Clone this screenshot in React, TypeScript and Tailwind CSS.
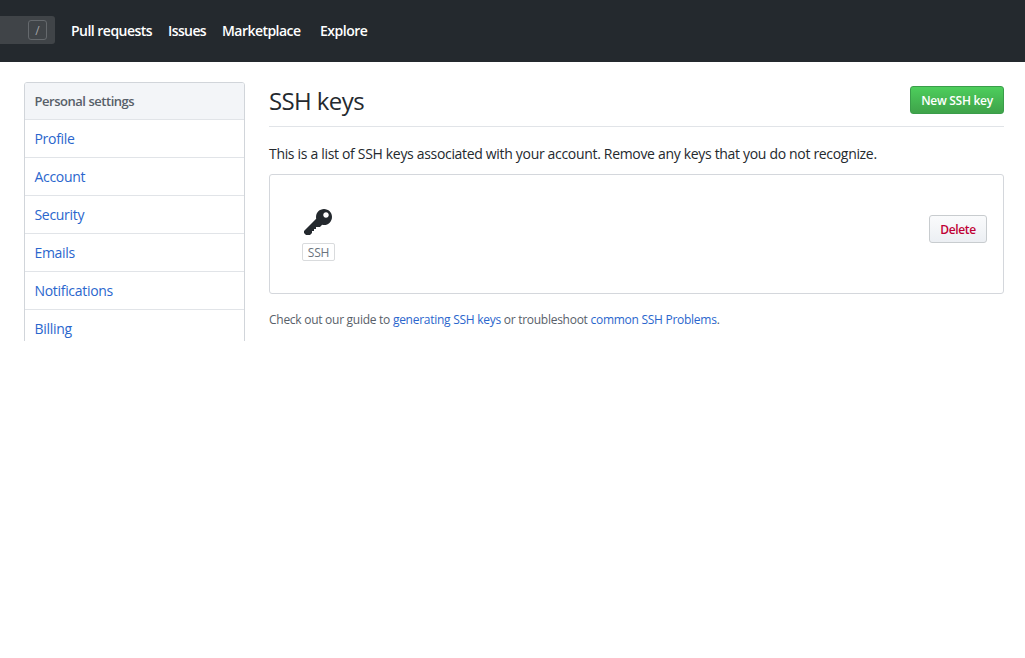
const navItems = [
  { label: 'Pull requests', cls: 'w-[97px] tracking-[-0.52px]' },
  { label: 'Issues', cls: 'w-[54px] tracking-[-0.6px]' },
  { label: 'Marketplace', cls: 'w-[98px] tracking-[-0.55px]' },
  { label: 'Explore', cls: 'w-[60px] tracking-[-0.5px]' },
];

const settings = ['Profile', 'Account', 'Security', 'Emails', 'Notifications', 'Billing'];

function KeyIcon() {
  return (
    <svg viewBox="0 0 14 16" width="28" height="32" fill="#24292e" aria-hidden="true">
      <path
        fillRule="evenodd"
        d="M12.83 2.17C12.08 1.42 11.14 1.03 10 1c-1.13.03-2.08.42-2.83 1.17S6.04 3.86 6.01 5c0 .3.03.59.09.89L0 12v1l1 1h2l1-1v-1h1v-1h1v-1h2l1.09-1.11c.3.08.59.11.91.11 1.14-.03 2.08-.42 2.83-1.17S13.97 6.14 14 5c-.03-1.14-.42-2.08-1.17-2.83zM11 5.38c-.77 0-1.38-.61-1.38-1.38 0-.77.61-1.38 1.38-1.38.77 0 1.38.61 1.38 1.38 0 .77-.61 1.38-1.38 1.38z"
      />
    </svg>
  );
}

function Header() {
  return (
    <header className="flex h-[62px] items-start bg-[#24292e] pt-4">
      <div className="flex h-7 w-[55px] items-center justify-end rounded-r-[3px] bg-[#404448] pr-2">
        <kbd className="flex h-5 w-[19px] items-center justify-center rounded-[3px] border border-[#65696d] pt-px font-['Open_Sans',sans-serif] text-[12px] text-[#a0a3a6]">
          /
        </kbd>
      </div>
      <nav className="ml-4 flex h-[29px] items-center text-[14px] font-semibold text-white">
        {navItems.map((item) => (
          <a key={item.label} className={item.cls}>
            {item.label}
          </a>
        ))}
      </nav>
    </header>
  );
}

function Sidebar() {
  return (
    <aside className="h-[259px] w-[221px] shrink-0 overflow-hidden">
      <nav className="rounded-[3px] border border-[#d1d5da]">
        <h3 className="flex h-[37px] items-center rounded-t-[2px] border-b border-[#e1e4e8] bg-[#f3f5f8] px-[9.5px] pt-px text-[13px] font-semibold tracking-[-0.47px] text-[#586069]">
          Personal settings
        </h3>
        {settings.map((item) => (
          <a
            key={item}
            className="flex h-[38px] items-center border-b border-[#e1e4e8] px-[9.5px] text-[14px] tracking-[-0.31px] text-[#2a66cd]"
          >
            {item}
          </a>
        ))}
      </nav>
    </aside>
  );
}

export default function App() {
  return (
    <div className="h-[658px] overflow-hidden bg-white font-['Open_Sans',sans-serif] text-[#24292e]">
      <Header />
      <div className="flex items-start gap-6 pt-5 pr-[21px] pl-6">
        <Sidebar />
        <main className="min-w-0 flex-1 whitespace-nowrap">
          <div className="flex h-[45px] items-start justify-between border-b border-[#e1e4e8] pt-1">
            <h2 className="-mt-px text-[24px] leading-[32px] font-normal tracking-[-0.6px]">SSH keys</h2>
            <button className="flex h-7 w-[94px] items-center justify-center rounded-[3px] border border-[#3a9d4a] bg-linear-to-b from-[#4dce5c] to-[#3fa34a] pt-0.5 text-[12px] font-semibold tracking-[-0.28px] text-white">
              New SSH key
            </button>
          </div>
          <p className="mt-4 text-[14px] leading-[22px] tracking-[-0.32px]">
            This is a list of SSH keys associated with your account. Remove any keys that you do not
            recognize.
          </p>
          <section className="mt-[9px] flex h-[120px] items-start justify-between rounded-[3px] border border-[#d4d7dc] pt-8 pr-4 pl-8">
            <div className="flex w-[33px] flex-col items-start">
              <div className="ml-0.5 h-8 w-7">
                <KeyIcon />
              </div>
              <span className="mt-1 flex h-[18px] w-[33px] items-center justify-center rounded-[2px] border border-[#d9dbdd] pt-0.5 text-[12px] tracking-[-0.2px] text-[#6a737d]">
                SSH
              </span>
            </div>
            <button className="mt-2 flex h-7 w-[58px] items-center justify-center rounded-[3px] border border-[#c8cccf] bg-linear-to-b from-[#fafbfc] to-[#eceff3] pt-0.5 text-[12px] font-semibold tracking-[-0.36px] text-[#c00035]">
              Delete
            </button>
          </section>
          <p className="mt-[17px] text-[12px] leading-[18px] tracking-[-0.27px] text-[#586069]">
            Check out our guide to <a className="text-[#2a66cd]">generating SSH keys</a> or troubleshoot{' '}
            <a className="text-[#2a66cd]">common SSH Problems</a>.
          </p>
        </main>
      </div>
    </div>
  );
}
